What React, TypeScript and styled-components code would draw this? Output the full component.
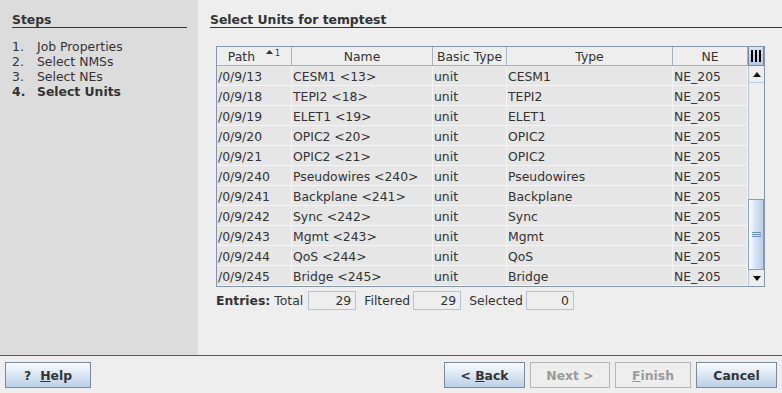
import { createGlobalStyle, styled } from "styled-components";

const GlobalStyle = createGlobalStyle`
   html, body {
      margin: 0;
      padding: 0;
      background: #eeeeee;
   }
   body {
      font-family: "DejaVu Sans", "Liberation Sans", sans-serif;
      font-size: 12.4px;
      color: #333333;
   }
`;

const Window = styled.div`
   width: 782px;
   height: 393px;
   display: flex;
   flex-direction: column;
   background: #eeeeee;
   overflow: hidden;
`;

const Main = styled.div`
   display: flex;
   height: 355px;
   border-bottom: 1px solid #5a5a5a;
`;

const Sidebar = styled.aside`
   width: 198px;
   box-sizing: border-box;
   padding: 12px 11px 0 12px;
   background: #dcdcdc;
`;

const Heading = styled.h2`
   margin: 0;
   font-size: 12.4px;
   font-weight: bold;
   line-height: 15px;
   border-bottom: 1px solid #333333;
`;

const StepList = styled.ol`
   list-style: none;
   margin: 11px 0 0;
   padding: 0;
`;

const Step = styled.li<{ $current?: boolean }>`
   display: flex;
   line-height: 15px;
   font-weight: ${({ $current }) => ($current ? "bold" : "normal")};
   span {
      width: 25px;
   }
`;

const Content = styled.section`
   flex: 1;
   padding: 12px 0 0 12px;
   display: flex;
   flex-direction: column;
`;

const Table = styled.div`
   margin: 18px 0 0 6px;
   width: 549px;
   display: flex;
   border: 1px solid #8595aa;
   box-sizing: border-box;
   background: #e6e6e6;
`;

const Grid = styled.div`
   display: grid;
   grid-template-columns: 75px 141px 74px 166px 75px;
   grid-auto-rows: 20px;
   grid-template-rows: 19px;
`;

const HeaderCell = styled.div`
   display: flex;
   align-items: center;
   justify-content: center;
   gap: 11px;
   background: #eeeeee;
   border-right: 1px solid #a6b2c2;
   border-bottom: 1px solid #a6b2c2;
   box-sizing: border-box;
   white-space: nowrap;
   overflow: hidden;
`;

const SortMark = styled.span`
   display: flex;
   align-items: flex-start;
   gap: 2px;
   font-size: 8px;
   line-height: 8px;
   margin-top: -4px;
`;

const Cell = styled.div`
   padding: 2px 0 0 1px;
   line-height: 17px;
   border-right: 1px solid #f4f4f4;
   border-bottom: 1px solid #f4f4f4;
   box-sizing: border-box;
   white-space: nowrap;
   overflow: hidden;
`;

const ScrollColumn = styled.div`
   width: 16px;
   display: flex;
   flex-direction: column;
   background: #eeeeee;
`;

const ColumnControl = styled.div`
   height: 19px;
   box-sizing: border-box;
   border: 1px solid #7a8a99;
   border-top: none;
   background: linear-gradient(#d6e3f2, #b4cae3);
   display: flex;
   align-items: center;
   justify-content: center;
`;

const ArrowButton = styled.div`
   height: 16px;
   box-sizing: border-box;
   border-left: 1px solid #b8c4d2;
   background: #eeeeee;
   display: flex;
   align-items: center;
   justify-content: center;
`;

const Track = styled.div`
   flex: 1;
   display: flex;
   flex-direction: column;
   border-left: 1px solid #b8c4d2;
   border-top: 1px solid #b9cbe6;
`;

const Thumb = styled.div`
   margin-top: auto;
   height: 71px;
   box-sizing: border-box;
   border: 1px solid #7e9ccc;
   margin-left: -1px;
   background: linear-gradient(90deg, #ffffff, #dbe6f3 40%, #b8cde6);
   display: flex;
   align-items: center;
   justify-content: center;
`;

const EntriesRow = styled.div`
   margin: 4px 0 0 6px;
   display: flex;
   align-items: center;
   strong {
      margin-right: 4px;
   }
`;

const Label = styled.span<{ $first?: boolean }>`
   margin: 0 3px 0 ${({ $first }) => ($first ? 0 : 8)}px;
   &:first-of-type {
      margin-right: 5px;
   }
`;

const CountBox = styled.div`
   width: 48px;
   height: 19px;
   box-sizing: border-box;
   border: 1px solid #b3c4d8;
   text-align: right;
   padding-right: 4px;
   line-height: 17px;
`;

const Footer = styled.footer`
   flex: 1;
   display: flex;
   align-items: flex-start;
   padding: 6px 5px 0;
   gap: 5px;
`;

const Spacer = styled.div`
   flex: 1;
`;

const Button = styled.button<{ $w: number }>`
   width: ${({ $w }) => $w}px;
   height: 26px;
   padding: 0;
   font-family: "DejaVu Sans", "Liberation Sans", sans-serif;
   font-size: 12.4px;
   font-weight: bold;
   color: #333333;
   border: 1px solid #7a8a99;
   background: linear-gradient(#fbfcfe, #dde8f4 45%, #bcd0e6);
   &:disabled {
      color: #9a9a9a;
      border-color: #b4b4b4;
      background: #eeeeee;
   }
`;

const HelpMark = styled.span`
   margin-right: 9px;
`;

const rows = [
   ["/0/9/13", "CESM1 <13>", "CESM1"],
   ["/0/9/18", "TEPI2 <18>", "TEPI2"],
   ["/0/9/19", "ELET1 <19>", "ELET1"],
   ["/0/9/20", "OPIC2 <20>", "OPIC2"],
   ["/0/9/21", "OPIC2 <21>", "OPIC2"],
   ["/0/9/240", "Pseudowires <240>", "Pseudowires"],
   ["/0/9/241", "Backplane <241>", "Backplane"],
   ["/0/9/242", "Sync <242>", "Sync"],
   ["/0/9/243", "Mgmt <243>", "Mgmt"],
   ["/0/9/244", "QoS <244>", "QoS"],
   ["/0/9/245", "Bridge <245>", "Bridge"],
];

const steps = ["Job Properties", "Select NMSs", "Select NEs", "Select Units"];

const Triangle = ({ down }: { down?: boolean }) => (
   <svg width="8" height="5" viewBox="0 0 8 5">
      <path d={down ? "M0 0H8L4 5Z" : "M0 5H8L4 0Z"} fill="#111" />
   </svg>
);

const App = () => {
   return (
      <Window>
         <GlobalStyle />
         <Main>
            <Sidebar>
               <Heading>Steps</Heading>
               <StepList>
                  {steps.map((s, i) => (
                     <Step key={s} $current={i === 3}>
                        <span>{i + 1}.</span>
                        {s}
                     </Step>
                  ))}
               </StepList>
            </Sidebar>
            <Content>
               <Heading>Select Units for temptest</Heading>
               <Table>
                  <Grid>
                     <HeaderCell>
                        Path
                        <SortMark>
                           <svg width="7" height="4" viewBox="0 0 7 4">
                              <path d="M0 4H7L3.5 0Z" fill="#333" />
                           </svg>
                           1
                        </SortMark>
                     </HeaderCell>
                     <HeaderCell>Name</HeaderCell>
                     <HeaderCell>Basic Type</HeaderCell>
                     <HeaderCell>Type</HeaderCell>
                     <HeaderCell>NE</HeaderCell>
                     {rows.map(([path, name, type]) => (
                        <>
                           <Cell key={path}>{path}</Cell>
                           <Cell>{name}</Cell>
                           <Cell>unit</Cell>
                           <Cell>{type}</Cell>
                           <Cell>NE_205</Cell>
                        </>
                     ))}
                  </Grid>
                  <ScrollColumn>
                     <ColumnControl>
                        <svg width="12" height="12" viewBox="0 0 12 12">
                           <rect x="1" y="0" width="2" height="12" fill="#000" />
                           <rect x="5" y="0" width="2" height="12" fill="#000" />
                           <rect x="9" y="0" width="2" height="12" fill="#000" />
                        </svg>
                     </ColumnControl>
                     <ArrowButton>
                        <Triangle />
                     </ArrowButton>
                     <Track>
                        <Thumb>
                           <svg width="9" height="5" viewBox="0 0 9 5">
                              <rect y="0" width="9" height="1" fill="#6b8cc6" />
                              <rect y="2" width="9" height="1" fill="#6b8cc6" />
                              <rect y="4" width="9" height="1" fill="#6b8cc6" />
                           </svg>
                        </Thumb>
                     </Track>
                     <ArrowButton>
                        <Triangle down />
                     </ArrowButton>
                  </ScrollColumn>
               </Table>
               <EntriesRow>
                  <strong>Entries:</strong>
                  <Label $first>Total</Label>
                  <CountBox>29</CountBox>
                  <Label>Filtered</Label>
                  <CountBox>29</CountBox>
                  <Label>Selected</Label>
                  <CountBox>0</CountBox>
               </EntriesRow>
            </Content>
         </Main>
         <Footer>
            <Button $w={86}>
               <HelpMark>?</HelpMark>
               <u>H</u>elp
            </Button>
            <Spacer />
            <Button $w={81}>
               &lt; <u>B</u>ack
            </Button>
            <Button $w={80} disabled>
               Next &gt;
            </Button>
            <Button $w={76} disabled>
               <u>F</u>inish
            </Button>
            <Button $w={81}>Cancel</Button>
         </Footer>
      </Window>
   );
};

export default App;
